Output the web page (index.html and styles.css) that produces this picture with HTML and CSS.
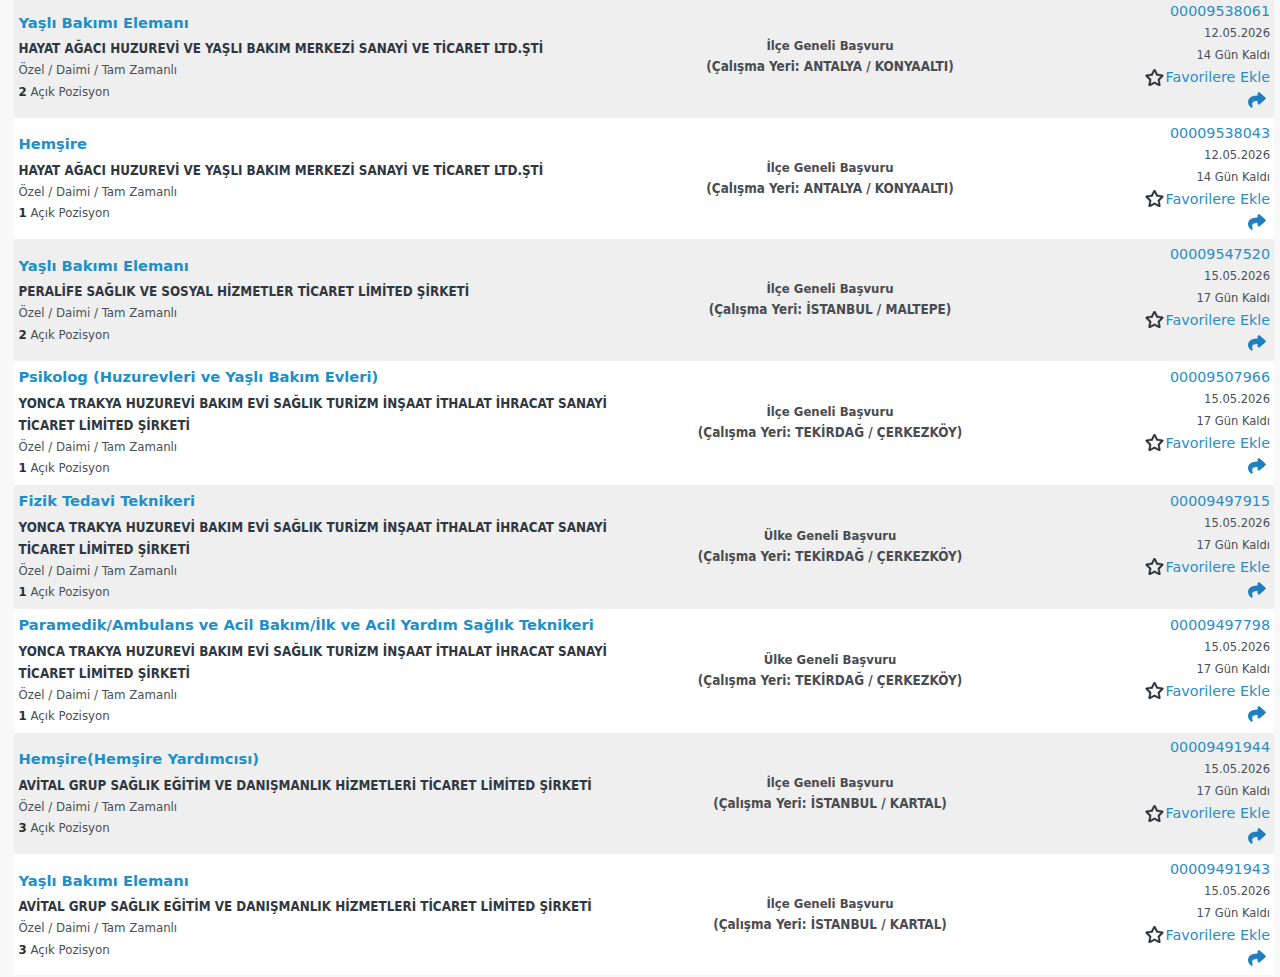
FILE: index.html
```html
<!DOCTYPE html>
<html lang="tr">

<head>
    <meta charset="UTF-8">
    <meta name="viewport" content="width=device-width, initial-scale=1.0">
    <title>İş İlanları</title>
    <link rel="stylesheet" href="styles.css">
</head>

<body>
    <svg class="icon-defs" width="0" height="0">
        <symbol id="star" viewBox="0 0 576 512">
            <path d="M528.1 171.5L382 150.2 316.7 17.8c-11.7-23.6-45.6-23.9-57.4 0L194 150.2 47.9 171.5c-26.2 3.8-36.7 36.1-17.7 54.6l105.7 103-25 145.5c-4.5 26.3 23.2 46 46.4 33.7L288 439.6l130.7 68.7c23.2 12.2 50.9-7.4 46.4-33.7l-25-145.5 105.7-103c19-18.5 8.5-50.8-17.7-54.6zM388.6 312.3l23.7 138.4L288 385.4l-124.3 65.3 23.7-138.4-100.6-98 139-20.2 62.2-126 62.2 126 139 20.2-100.6 98z" fill="#2a2f36" stroke="#2a2f36" stroke-width="14" />
        </symbol>
        <symbol id="share" viewBox="-16 -16 544 544">
            <path d="M503.691 189.836L327.687 37.851C312.281 24.546 288 35.347 288 56.015v80.053C127.371 137.907 0 170.1 0 322.326c0 61.441 39.581 122.309 83.333 154.132 13.653 9.931 33.111-2.533 28.077-18.631C66.066 312.814 132.917 274.316 288 272.085V360c0 20.7 24.3 31.453 39.687 18.164l176.004-152c11.071-9.562 11.086-26.753 0-36.328z" fill="#1c7fc0" stroke="#1c7fc0" stroke-width="30" />
        </symbol>
    </svg>

    <div class="job-list">
        <div class="job-row">
            <div class="job-info">
                <a class="job-title">Yaşlı Bakımı Elemanı</a>
                <div class="company">HAYAT AĞACI HUZUREVİ VE YAŞLI BAKIM MERKEZİ SANAYİ VE TİCARET LTD.ŞTİ</div>
                <div class="meta">Özel / Daimi / Tam Zamanlı</div>
                <div class="meta"><b>2</b> Açık Pozisyon</div>
            </div>
            <div class="job-place">İlçe Geneli Başvuru<span class="place-city">(Çalışma Yeri: ANTALYA / KONYAALTI)</span></div>
            <div class="job-side">
                <a class="job-no">00009538061</a>
                <div class="side-line">12.05.2026</div>
                <div class="side-line">14 Gün Kaldı</div>
                <a class="fav"><svg class="star"><use href="#star" /></svg>Favorilere Ekle</a>
                <svg class="share"><use href="#share" /></svg>
            </div>
        </div>
        <div class="job-row">
            <div class="job-info">
                <a class="job-title">Hemşire</a>
                <div class="company">HAYAT AĞACI HUZUREVİ VE YAŞLI BAKIM MERKEZİ SANAYİ VE TİCARET LTD.ŞTİ</div>
                <div class="meta">Özel / Daimi / Tam Zamanlı</div>
                <div class="meta"><b>1</b> Açık Pozisyon</div>
            </div>
            <div class="job-place">İlçe Geneli Başvuru<span class="place-city">(Çalışma Yeri: ANTALYA / KONYAALTI)</span></div>
            <div class="job-side">
                <a class="job-no">00009538043</a>
                <div class="side-line">12.05.2026</div>
                <div class="side-line">14 Gün Kaldı</div>
                <a class="fav"><svg class="star"><use href="#star" /></svg>Favorilere Ekle</a>
                <svg class="share"><use href="#share" /></svg>
            </div>
        </div>
        <div class="job-row">
            <div class="job-info">
                <a class="job-title">Yaşlı Bakımı Elemanı</a>
                <div class="company">PERALİFE SAĞLIK VE SOSYAL HİZMETLER TİCARET LİMİTED ŞİRKETİ</div>
                <div class="meta">Özel / Daimi / Tam Zamanlı</div>
                <div class="meta"><b>2</b> Açık Pozisyon</div>
            </div>
            <div class="job-place">İlçe Geneli Başvuru<span class="place-city">(Çalışma Yeri: İSTANBUL / MALTEPE)</span></div>
            <div class="job-side">
                <a class="job-no">00009547520</a>
                <div class="side-line">15.05.2026</div>
                <div class="side-line">17 Gün Kaldı</div>
                <a class="fav"><svg class="star"><use href="#star" /></svg>Favorilere Ekle</a>
                <svg class="share"><use href="#share" /></svg>
            </div>
        </div>
        <div class="job-row">
            <div class="job-info">
                <a class="job-title">Psikolog (Huzurevleri ve Yaşlı Bakım Evleri)</a>
                <div class="company">YONCA TRAKYA HUZUREVİ BAKIM EVİ SAĞLIK TURİZM İNŞAAT İTHALAT İHRACAT SANAYİ TİCARET LİMİTED ŞİRKETİ</div>
                <div class="meta">Özel / Daimi / Tam Zamanlı</div>
                <div class="meta"><b>1</b> Açık Pozisyon</div>
            </div>
            <div class="job-place">İlçe Geneli Başvuru<span class="place-city">(Çalışma Yeri: TEKİRDAĞ / ÇERKEZKÖY)</span></div>
            <div class="job-side">
                <a class="job-no">00009507966</a>
                <div class="side-line">15.05.2026</div>
                <div class="side-line">17 Gün Kaldı</div>
                <a class="fav"><svg class="star"><use href="#star" /></svg>Favorilere Ekle</a>
                <svg class="share"><use href="#share" /></svg>
            </div>
        </div>
        <div class="job-row">
            <div class="job-info">
                <a class="job-title">Fizik Tedavi Teknikeri</a>
                <div class="company">YONCA TRAKYA HUZUREVİ BAKIM EVİ SAĞLIK TURİZM İNŞAAT İTHALAT İHRACAT SANAYİ TİCARET LİMİTED ŞİRKETİ</div>
                <div class="meta">Özel / Daimi / Tam Zamanlı</div>
                <div class="meta"><b>1</b> Açık Pozisyon</div>
            </div>
            <div class="job-place">Ülke Geneli Başvuru<span class="place-city">(Çalışma Yeri: TEKİRDAĞ / ÇERKEZKÖY)</span></div>
            <div class="job-side">
                <a class="job-no">00009497915</a>
                <div class="side-line">15.05.2026</div>
                <div class="side-line">17 Gün Kaldı</div>
                <a class="fav"><svg class="star"><use href="#star" /></svg>Favorilere Ekle</a>
                <svg class="share"><use href="#share" /></svg>
            </div>
        </div>
        <div class="job-row">
            <div class="job-info">
                <a class="job-title">Paramedik/Ambulans ve Acil Bakım/İlk ve Acil Yardım Sağlık Teknikeri</a>
                <div class="company">YONCA TRAKYA HUZUREVİ BAKIM EVİ SAĞLIK TURİZM İNŞAAT İTHALAT İHRACAT SANAYİ TİCARET LİMİTED ŞİRKETİ</div>
                <div class="meta">Özel / Daimi / Tam Zamanlı</div>
                <div class="meta"><b>1</b> Açık Pozisyon</div>
            </div>
            <div class="job-place">Ülke Geneli Başvuru<span class="place-city">(Çalışma Yeri: TEKİRDAĞ / ÇERKEZKÖY)</span></div>
            <div class="job-side">
                <a class="job-no">00009497798</a>
                <div class="side-line">15.05.2026</div>
                <div class="side-line">17 Gün Kaldı</div>
                <a class="fav"><svg class="star"><use href="#star" /></svg>Favorilere Ekle</a>
                <svg class="share"><use href="#share" /></svg>
            </div>
        </div>
        <div class="job-row">
            <div class="job-info">
                <a class="job-title">Hemşire(Hemşire Yardımcısı)</a>
                <div class="company">AVİTAL GRUP SAĞLIK EĞİTİM VE DANIŞMANLIK HİZMETLERİ TİCARET LİMİTED ŞİRKETİ</div>
                <div class="meta">Özel / Daimi / Tam Zamanlı</div>
                <div class="meta"><b>3</b> Açık Pozisyon</div>
            </div>
            <div class="job-place">İlçe Geneli Başvuru<span class="place-city">(Çalışma Yeri: İSTANBUL / KARTAL)</span></div>
            <div class="job-side">
                <a class="job-no">00009491944</a>
                <div class="side-line">15.05.2026</div>
                <div class="side-line">17 Gün Kaldı</div>
                <a class="fav"><svg class="star"><use href="#star" /></svg>Favorilere Ekle</a>
                <svg class="share"><use href="#share" /></svg>
            </div>
        </div>
        <div class="job-row">
            <div class="job-info">
                <a class="job-title">Yaşlı Bakımı Elemanı</a>
                <div class="company">AVİTAL GRUP SAĞLIK EĞİTİM VE DANIŞMANLIK HİZMETLERİ TİCARET LİMİTED ŞİRKETİ</div>
                <div class="meta">Özel / Daimi / Tam Zamanlı</div>
                <div class="meta"><b>3</b> Açık Pozisyon</div>
            </div>
            <div class="job-place">İlçe Geneli Başvuru<span class="place-city">(Çalışma Yeri: İSTANBUL / KARTAL)</span></div>
            <div class="job-side">
                <a class="job-no">00009491943</a>
                <div class="side-line">15.05.2026</div>
                <div class="side-line">17 Gün Kaldı</div>
                <a class="fav"><svg class="star"><use href="#star" /></svg>Favorilere Ekle</a>
                <svg class="share"><use href="#share" /></svg>
            </div>
        </div>
    </div>
</body>

</html>
```

FILE: styles.css
```css
html,
body {
    height: 977px;
    overflow: hidden;
}

body {
    margin: 0;
    background-color: #f8f8f8;
    color: #4a4f57;
    font-family: "DejaVu Sans Condensed", "DejaVu Sans", sans-serif;
    font-stretch: condensed;
    font-size: 13.1px;
}

.icon-defs {
    display: block;
}

.job-list {
    margin: -3.5px 6px 0 14px;
}

.job-row {
    display: flex;
    align-items: center;
    min-height: 121.4px;
    background-color: #fff;
}

.job-row:nth-child(odd) {
    background-color: #efefef;
}

.job-info {
    box-sizing: border-box;
    width: 610px;
    padding: 5.75px 0 5.75px 4.5px;
}

.job-title {
    display: block;
    margin-bottom: 5.5px;
    color: #1d8fc9;
    font-family: "DejaVu Sans", sans-serif;
    font-stretch: normal;
    font-size: 14.7px;
    font-weight: bold;
    line-height: 21px;
}

.company {
    margin-bottom: -1px;
    color: #2f3742;
    font-size: 13.3px;
    font-weight: bold;
    line-height: 22px;
}

.meta {
    line-height: 21.5px;
}

.meta b {
    color: #2a2f36;
}

.job-place {
    width: 412px;
    padding-bottom: 1.5px;
    text-align: center;
    color: #484c52;
    font-size: 13px;
    font-weight: bold;
    line-height: 21px;
}

.place-city {
    display: block;
    font-size: 13.4px;
}

.job-side {
    flex: 1;
    display: flex;
    flex-direction: column;
    align-items: flex-end;
    padding: 0 4px 5px 0;
    font-size: 12.8px;
    line-height: 22px;
}

.job-no,
.fav {
    color: #2b8cc8;
    font-family: "DejaVu Sans", sans-serif;
    font-stretch: normal;
    font-size: 14.3px;
}

.fav {
    display: flex;
    align-items: center;
}

.star {
    width: 19px;
    height: 17px;
    margin-right: 2px;
}

.share {
    width: 20px;
    height: 18px;
    margin: 3px 3px 0 0;
}
```
